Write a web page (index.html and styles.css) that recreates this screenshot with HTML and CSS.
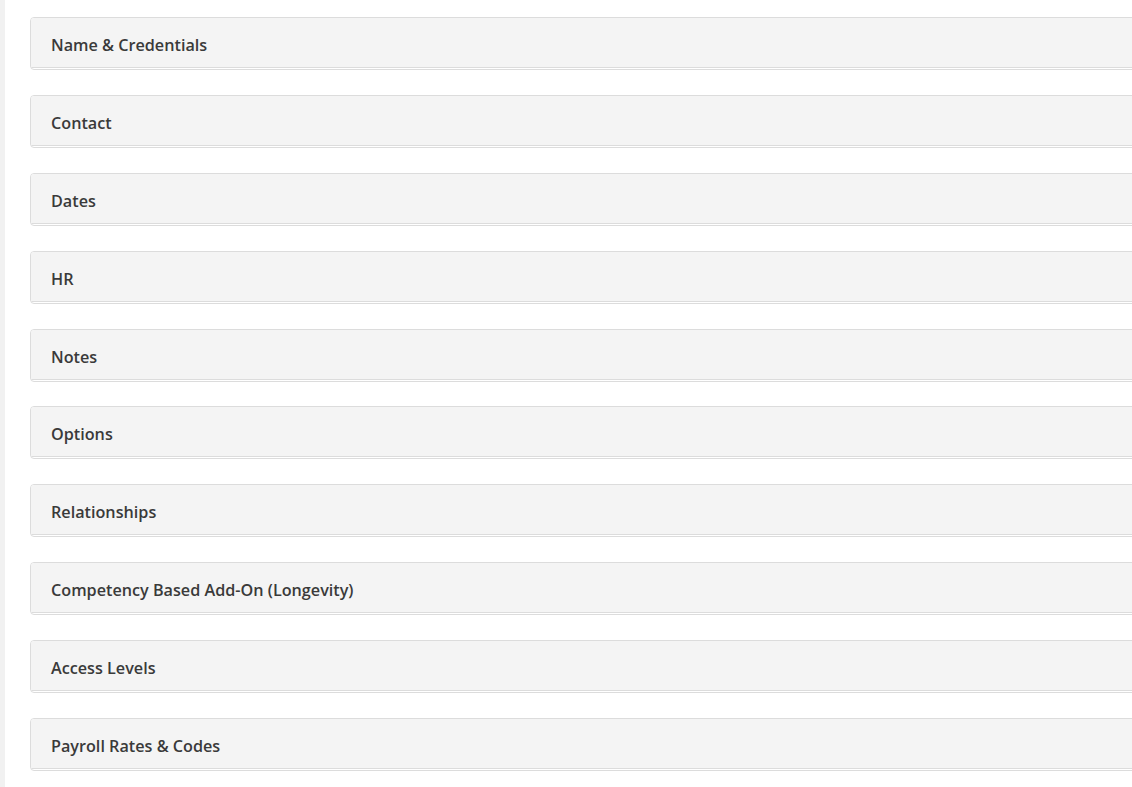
FILE: index.html
```html
<!DOCTYPE html>
<html>
<head>
<meta charset="utf-8">
<link rel="stylesheet" href="styles.css">
</head>
<body>
<div class="page">
  <div class="rail"></div>
  <div class="content">
    <div class="panel"><div class="panel-heading">Name &amp; Credentials</div><div class="panel-body"></div></div>
    <div class="panel"><div class="panel-heading">Contact</div><div class="panel-body"></div></div>
    <div class="panel"><div class="panel-heading">Dates</div><div class="panel-body"></div></div>
    <div class="panel"><div class="panel-heading">HR</div><div class="panel-body"></div></div>
    <div class="panel"><div class="panel-heading">Notes</div><div class="panel-body"></div></div>
    <div class="panel"><div class="panel-heading">Options</div><div class="panel-body"></div></div>
    <div class="panel"><div class="panel-heading">Relationships</div><div class="panel-body"></div></div>
    <div class="panel"><div class="panel-heading">Competency Based Add-On (Longevity)</div><div class="panel-body"></div></div>
    <div class="panel"><div class="panel-heading">Access Levels</div><div class="panel-body"></div></div>
    <div class="panel"><div class="panel-heading">Payroll Rates &amp; Codes</div><div class="panel-body"></div></div>
  </div>
</div>
</body>
</html>
```
FILE: styles.css
```css
html, body {
  margin: 0;
  padding: 0;
  background: #fff;
  overflow: hidden;
  height: 787px;
}
.page {
  display: flex;
  min-height: 787px;
}
.rail {
  width: 5px;
  flex: none;
  background: #f1f1f1;
}
.content {
  flex: none;
  width: 1130px;
  padding: 17px 0 0 25px;
  display: flex;
  flex-direction: column;
  gap: 24.89px;
}
.panel {
  border: 1px solid #dcdcdc;
  border-radius: 4px;
  background: #fff;
  overflow: hidden;
}
.panel-heading {
  height: 50px;
  box-sizing: border-box;
  padding: 5px 20px 0;
  display: flex;
  align-items: center;
  background: #f4f4f4;
  border-bottom: 1px solid #dcdcdc;
  font-family: "Open Sans", "Liberation Sans", sans-serif;
  font-weight: 600;
  font-size: 16.2px;
  color: #3a3a3a;
}
.panel-body {
  height: 1px;
}
```
